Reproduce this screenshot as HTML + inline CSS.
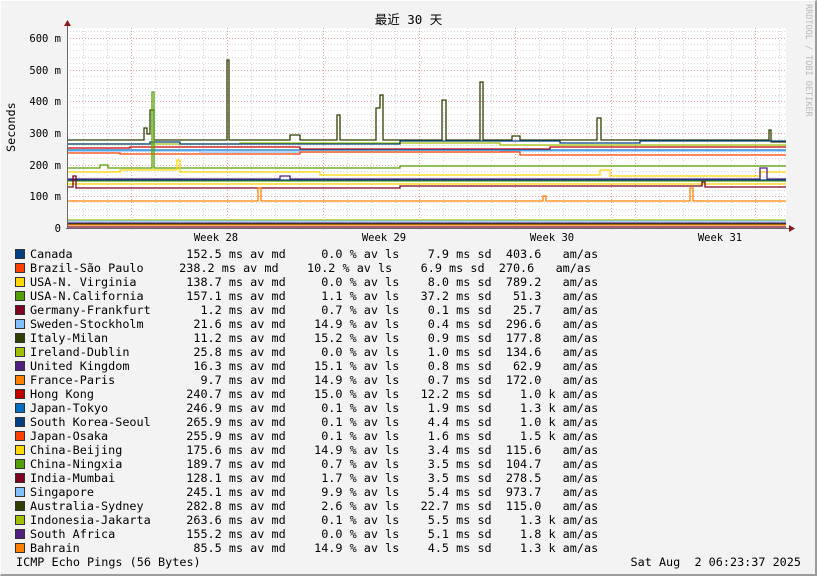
<!DOCTYPE html>
<html><head><meta charset="utf-8"><style>
html,body{margin:0;padding:0}
body{width:817px;height:576px;background:#f3f3f3;position:relative;overflow:hidden;font-family:"DejaVu Sans Mono","Liberation Mono","Noto Sans CJK SC",monospace;color:#000}
.frame{position:absolute;left:0;top:0;border-left:1px solid #fff;border-top:1px solid #fff;border-right:2px solid #9c9c9c;border-bottom:2px solid #9c9c9c;box-sizing:border-box;width:817px;height:576px}
.t{position:absolute;white-space:pre;font-size:11.8px;line-height:14px}
.sq{position:absolute;left:15px;width:8px;height:8px;border:1px solid #333}
</style></head><body>
<div class="frame"></div>
<div class="t" style="left:0;width:817px;top:13px;text-align:center;font-family:'DejaVu Sans Mono','Noto Sans CJK SC',monospace;font-size:12.5px">最近 30 天</div>
<div class="t" style="left:801px;top:4px;color:#b8b8b8;font-size:8.5px;transform-origin:0 0;transform:translate(14px,0) rotate(90deg)">RRDTOOL / TOBI OETIKER</div>
<div class="t" style="left:4px;top:152px;transform-origin:0 0;transform:rotate(-90deg);font-size:11.8px">Seconds</div>
<svg width="817" height="576" style="position:absolute;left:0;top:0" xmlns="http://www.w3.org/2000/svg">
<rect x="67" y="28" width="719" height="200" fill="#fff"/>
<g stroke="#d8d8d8" stroke-width="1" stroke-dasharray="1,2">
<path d="M67 221.5H786M67 215.5H786M67 209.5H786M67 202.5H786M67 190.5H786M67 183.5H786M67 177.5H786M67 171.5H786M67 158.5H786M67 152.5H786M67 145.5H786M67 139.5H786M67 126.5H786M67 120.5H786M67 114.5H786M67 107.5H786M67 95.5H786M67 88.5H786M67 82.5H786M67 76.5H786M67 63.5H786M67 57.5H786M67 50.5H786M67 44.5H786M67 31.5H786"/>
<path d="M83.5 28V228M107.5 28V228M155.5 28V228M179.5 28V228M203.5 28V228M251.5 28V228M275.5 28V228M299.5 28V228M347.5 28V228M371.5 28V228M395.5 28V228M443.5 28V228M467.5 28V228M491.5 28V228M539.5 28V228M563.5 28V228M587.5 28V228M659.5 28V228M683.5 28V228M707.5 28V228M731.5 28V228M779.5 28V228"/>
</g>
<g stroke="#e8a0a0" stroke-width="1" stroke-dasharray="1,2">
<path d="M67 38.5H786M67 70.5H786M67 101.5H786M67 133.5H786M67 165.5H786M67 196.5H786"/>
<path d="M131.5 28V228M227.5 28V228M323.5 28V228M419.5 28V228M515.5 28V228M611.5 28V228M635.5 28V228M755.5 28V228"/>
</g>
<g fill="none" stroke-width="1.3">
<path stroke="#304000" d="M67 140H144V128H147V134H150V110H154V140H227V60H229V140H290V135H300V140H337V115H340V140H376V108H380V95H383V140H442V100H446V140H480V82H483V140H512V136H520V140H597V118H601V140H769V130H771V142H786"/>
<path stroke="#a0c000" d="M67 144H240V143H500V145H786"/>
<path stroke="#004080" d="M67 144H150V142H180V144H400V141H560V143H640V141H786"/>
<path stroke="#c00000" d="M67 148H130V147H300V149H550V147H786"/>
<path stroke="#0070c0" d="M67 150H786"/>
<path stroke="#80c0ff" d="M67 151H200V152H500V151H786"/>
<path stroke="#ff4000" d="M67 153H120V154H300V152H520V155H786"/>
<path stroke="#55a000" d="M67 168H100V165H108V168H152V92H154V168H400V166H786"/>
<path stroke="#ffd700" d="M67 172H120V170H177V160H180V172H320V175H600V170H610V176H760V172H786"/>
<path stroke="#502080" d="M67 179H280V176H290V179H760V168H767V179H786"/>
<path stroke="#55a000" d="M67 181H786"/>
<path stroke="#004080" d="M67 180H786"/>
<path stroke="#ffd700" d="M67 184H786"/>
<path stroke="#800020" d="M67 187H73V176H76V188H400V186H702V182H705V187H786"/>
<path stroke="#ff8000" d="M67 201H258V188H261V201H543V196H546V201H690V188H693V201H786"/>
<path stroke="#a0c000" d="M67 220H786"/>
<path stroke="#80c0ff" d="M67 221H786"/>
<path stroke="#502080" d="M67 223H786"/>
<path stroke="#304000" d="M67 224H786"/>
<path stroke="#ff8000" d="M67 225H786"/>
<path stroke="#800020" d="M67 227H786"/>
</g>
<g stroke="#666" stroke-width="1"><path d="M67.5 26V229M66 228.5H790"/></g>
<path d="M64 26L67.5 20L71 26Z" fill="#8b1a1a"/>
<path d="M789 225L795 228.5L789 232Z" fill="#8b1a1a"/>
<g font-family="DejaVu Sans Mono,Liberation Mono,monospace" font-size="10.5" fill="#000" text-anchor="end">
<text x="61" y="42">600 m</text><text x="61" y="74">500 m</text><text x="61" y="105">400 m</text><text x="61" y="137">300 m</text><text x="61" y="169">200 m</text><text x="61" y="200">100 m</text><text x="61" y="232">0</text>
</g>
<g font-family="DejaVu Sans Mono,Liberation Mono,monospace" font-size="10.5" fill="#000" text-anchor="middle">
<text x="216" y="241">Week 28</text><text x="384" y="241">Week 29</text><text x="552" y="241">Week 30</text><text x="720" y="241">Week 31</text>
</g>
</svg>
<div class="sq" style="top:249px;background:#004080"></div>
<div class="sq" style="top:263px;background:#ff4000"></div>
<div class="sq" style="top:277px;background:#ffd700"></div>
<div class="sq" style="top:291px;background:#55a000"></div>
<div class="sq" style="top:305px;background:#800020"></div>
<div class="sq" style="top:319px;background:#80c0ff"></div>
<div class="sq" style="top:333px;background:#304000"></div>
<div class="sq" style="top:347px;background:#a0c000"></div>
<div class="sq" style="top:361px;background:#502080"></div>
<div class="sq" style="top:375px;background:#ff8000"></div>
<div class="sq" style="top:389px;background:#c00000"></div>
<div class="sq" style="top:403px;background:#0070c0"></div>
<div class="sq" style="top:417px;background:#004080"></div>
<div class="sq" style="top:431px;background:#ff4000"></div>
<div class="sq" style="top:445px;background:#ffd700"></div>
<div class="sq" style="top:459px;background:#55a000"></div>
<div class="sq" style="top:473px;background:#800020"></div>
<div class="sq" style="top:487px;background:#80c0ff"></div>
<div class="sq" style="top:501px;background:#304000"></div>
<div class="sq" style="top:515px;background:#a0c000"></div>
<div class="sq" style="top:529px;background:#502080"></div>
<div class="sq" style="top:543px;background:#ff8000"></div>
<div class="t" style="left:30px;top:247px">Canada                152.5 ms av md     0.0 % av ls    7.9 ms sd  403.6   am/as
Brazil-São Paulo     238.2 ms av md    10.2 % av ls    6.9 ms sd  270.6   am/as
USA-N. Virginia       138.7 ms av md     0.0 % av ls    8.0 ms sd  789.2   am/as
USA-N.California      157.1 ms av md     1.1 % av ls   37.2 ms sd   51.3   am/as
Germany-Frankfurt       1.2 ms av md     0.7 % av ls    0.1 ms sd   25.7   am/as
Sweden-Stockholm       21.6 ms av md    14.9 % av ls    0.4 ms sd  296.6   am/as
Italy-Milan            11.2 ms av md    15.2 % av ls    0.9 ms sd  177.8   am/as
Ireland-Dublin         25.8 ms av md     0.0 % av ls    1.0 ms sd  134.6   am/as
United Kingdom         16.3 ms av md    15.1 % av ls    0.8 ms sd   62.9   am/as
France-Paris            9.7 ms av md    14.9 % av ls    0.7 ms sd  172.0   am/as
Hong Kong             240.7 ms av md    15.0 % av ls   12.2 ms sd    1.0 k am/as
Japan-Tokyo           246.9 ms av md     0.1 % av ls    1.9 ms sd    1.3 k am/as
South Korea-Seoul     265.9 ms av md     0.1 % av ls    4.4 ms sd    1.0 k am/as
Japan-Osaka           255.9 ms av md     0.1 % av ls    1.6 ms sd    1.5 k am/as
China-Beijing         175.6 ms av md    14.9 % av ls    3.4 ms sd  115.6   am/as
China-Ningxia         189.7 ms av md     0.7 % av ls    3.5 ms sd  104.7   am/as
India-Mumbai          128.1 ms av md     1.7 % av ls    3.5 ms sd  278.5   am/as
Singapore             245.1 ms av md     9.9 % av ls    5.4 ms sd  973.7   am/as
Australia-Sydney      282.8 ms av md     2.6 % av ls   22.7 ms sd  115.0   am/as
Indonesia-Jakarta     263.6 ms av md     0.1 % av ls    5.5 ms sd    1.3 k am/as
South Africa          155.2 ms av md     0.0 % av ls    5.1 ms sd    1.8 k am/as
Bahrain                85.5 ms av md    14.9 % av ls    4.5 ms sd    1.3 k am/as</div>
<div class="t" style="left:16px;top:555px">ICMP Echo Pings (56 Bytes)</div>
<div class="t" style="right:16px;top:555px">Sat Aug  2 06:23:37 2025</div>
</body></html>
